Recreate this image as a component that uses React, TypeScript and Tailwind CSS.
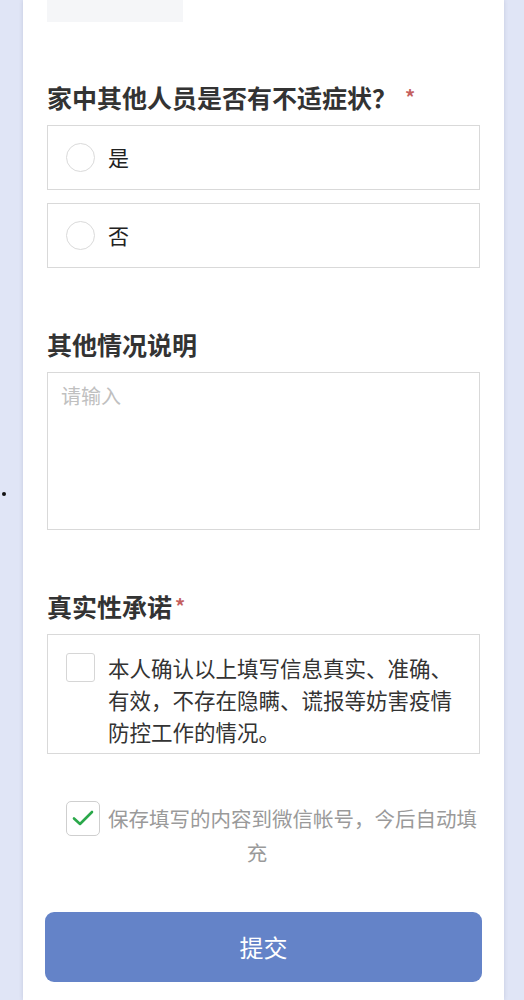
import React from "react";

const font = { fontFamily: '"Noto Sans CJK SC", "Noto Sans", sans-serif' };

function Heading({ text, star, starGap }: { text: string; star?: boolean; starGap?: string }) {
  return (
    <div className="flex items-center h-[32px] text-[25px] font-bold text-[#333333] leading-[32px]">
      <span>{text}</span>
      {star && <span className={`text-[#c4605e] text-[20px] font-bold ${starGap ?? "ml-1"}`}>*</span>}
    </div>
  );
}

function RadioOption({ label }: { label: string }) {
  return (
    <div className="flex items-center h-[65px] border border-[#d9d9d9] bg-white pl-[18px]">
      <div className="w-[29px] h-[29px] rounded-full border border-[#dadada] bg-white" />
      <span className="ml-[13px] text-[21px] text-[#222222] leading-none">{label}</span>
    </div>
  );
}

export default function App() {
  return (
    <div className="relative min-h-[1000px] w-[524px] bg-[#e0e5f6] overflow-hidden" style={font}>
      <div className="absolute left-[2px] top-[492px] w-[4px] h-[4px] rounded-full bg-[#111111]" />
      <div className="ml-[23px] w-[481px] min-h-[1000px] bg-white px-[24px] shadow-[0_0_4px_rgba(60,70,110,0.18)]">
        <div className="h-[22px] w-[136px] bg-[#f5f6f8]" />

        <div className="mt-[59px]">
          <Heading text="家中其他人员是否有不适症状？" star starGap="ml-[8px]" />
        </div>
        <div className="mt-[12px] flex flex-col gap-[13px]">
          <RadioOption label="是" />
          <RadioOption label="否" />
        </div>

        <div className="mt-[60px]">
          <Heading text="其他情况说明" />
        </div>
        <div className="mt-[12px] h-[158px] border border-[#d9d9d9] bg-white px-[13px] pt-[8px]">
          <div className="text-[20px] leading-[30px] text-[#c0c0c0]">请输入</div>
        </div>

        <div className="mt-[60px]">
          <Heading text="真实性承诺" star starGap="ml-[3px]" />
        </div>
        <div className="mt-[12px] h-[120px] border border-[#d9d9d9] bg-white flex pl-[18px] pt-[17px]">
          <div className="mt-[1px] w-[29px] h-[29px] shrink-0 rounded-[3px] border border-[#d6d6d6] bg-white" />
          <div className="ml-[13px] w-[350px] text-[21.5px] leading-[32px] text-[#333333]">
            本人确认以上填写信息真实、准确、有效，不存在隐瞒、谎报等妨害疫情防控工作的情况。
          </div>
        </div>

        <div className="mt-[47px] flex flex-col items-center">
          <div className="flex items-center h-[34px] w-[433px] pl-[19px]">
            <div className="w-[34px] h-[35px] shrink-0 rounded-[5px] border border-[#cfcfcf] bg-white flex items-center justify-center">
              <svg width="22" height="16" viewBox="0 0 22 16" fill="none">
                <path d="M2 8.5 L8 14 L20 2" stroke="#2aa84a" strokeWidth="2.6" strokeLinecap="round" strokeLinejoin="round" />
              </svg>
            </div>
            <span className="ml-[8px] text-[20.5px] leading-[34px] text-[#9a9a9a] whitespace-nowrap">
              保存填写的内容到微信帐号，今后自动填
            </span>
          </div>
          <div className="h-[34px] text-[20.5px] leading-[34px] text-[#9a9a9a] pr-[13px]">充</div>
        </div>

        <button className="mt-[43px] -mx-[2px] w-[437px] h-[70px] rounded-[9px] bg-[#6483c8] text-white text-[24px] flex items-center justify-center">
          提交
        </button>
      </div>
    </div>
  );
}
